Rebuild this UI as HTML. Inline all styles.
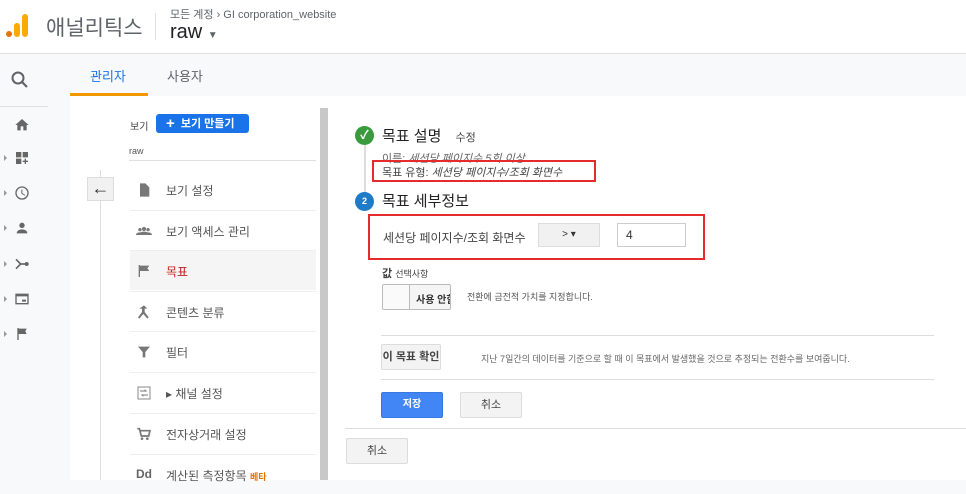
<!DOCTYPE html>
<html><head><meta charset="utf-8"><style>
*{margin:0;padding:0;box-sizing:border-box}
body{width:966px;height:480px;overflow:hidden;background:#f8f9fa;font-family:"Liberation Sans","Noto Sans CJK KR",sans-serif;color:#333;position:relative}
.a{position:absolute}
.t{font-size:12px;color:#444;white-space:nowrap}
.btn{position:absolute;background:#f3f3f3;border:1px solid #dcdcdc;border-radius:2px;font-size:11px;font-weight:bold;color:#444;text-align:center}
.mi{position:absolute;left:130px;width:186px;height:40px;border-top:1px solid #eee}
.mi span{position:absolute;left:36px;top:12px;font-size:12px;color:#555}
.ic{position:absolute;left:6px;top:12px;width:16px;height:16px;fill:#777}
.si{position:absolute;left:14px;width:16px;height:16px;fill:#666}
.ar{position:absolute;left:4px;width:0;height:0;border-left:3px solid #999;border-top:3px solid transparent;border-bottom:3px solid transparent}
</style></head><body>
<div class="a" style="left:0;top:0;width:966px;height:54px;background:#fff;border-bottom:1px solid #e0e0e0"></div>
<svg class="a" style="left:5px;top:12px" width="24" height="26"><circle cx="4" cy="22" r="3" fill="#e37400"/><rect x="9" y="11" width="6" height="14" rx="3" fill="#f9ab00"/><rect x="17" y="2" width="6" height="23" rx="3" fill="#f9ab00"/></svg>
<div class="a" style="left:46px;top:12px;font-size:21px;color:#5f6368">애널리틱스</div>
<div class="a" style="left:155px;top:13px;width:1px;height:27px;background:#e0e0e0"></div>
<div class="a" style="left:170px;top:6px;font-size:11px;color:#5f6368">모든 계정 › GI corporation_website</div>
<div class="a" style="left:170px;top:21px;font-size:20px;color:#202124">raw <span style="font-size:10px;color:#5f6368">▼</span></div>
<svg class="a" style="left:10px;top:70px" width="20" height="20"><circle cx="8" cy="8" r="5.5" stroke="#5f6368" stroke-width="2" fill="none"/><line x1="12" y1="12" x2="17" y2="17" stroke="#5f6368" stroke-width="2.2"/></svg>
<div class="a" style="left:0;top:106px;width:48px;height:1px;background:#e0e0e0"></div>
<svg class="si" style="top:117px" viewBox="0 0 24 24"><path d="M10 20v-6h4v6h5v-8h3L12 3 2 12h3v8z"/></svg>
<div class="ar" style="top:155px"></div>
<svg class="si" style="top:150px" viewBox="0 0 24 24"><path d="M3 3h8v8H3zM13 3h8v8h-8zM3 13h8v8H3zM16 13h2v3h3v2h-3v3h-2v-3h-3v-2h3z"/></svg>
<div class="ar" style="top:190px"></div>
<svg class="si" style="top:185px" viewBox="0 0 24 24"><path d="M12 2a10 10 0 1 0 0 20 10 10 0 0 0 0-20zm0 18a8 8 0 1 1 0-16 8 8 0 0 1 0 16zm.5-13H11v6l5 3 .8-1.2-4.3-2.6z"/></svg>
<div class="ar" style="top:225px"></div>
<svg class="si" style="top:220px" viewBox="0 0 24 24"><circle cx="12" cy="8" r="4"/><path d="M4 20c0-4 4-6 8-6s8 2 8 6z"/></svg>
<div class="ar" style="top:261px"></div>
<svg class="si" style="top:256px" viewBox="0 0 24 24"><path d="M3 5l7 7-7 7" stroke="#666" stroke-width="2.5" fill="none"/><path d="M10 12h8" stroke="#666" stroke-width="2.5"/><circle cx="19" cy="12" r="3"/></svg>
<div class="ar" style="top:296px"></div>
<svg class="si" style="top:291px" viewBox="0 0 24 24"><path d="M2 4h20v16H2zM4 8v10h16V8zM12 13h6v3h-6z"/></svg>
<div class="ar" style="top:331px"></div>
<svg class="si" style="top:326px" viewBox="0 0 24 24"><path d="M5 3h2v18H5zM7 4h12l-2 4 2 4H7z"/></svg>
<div class="a" style="left:90px;top:66px;font-size:13px;color:#1a73e8">관리자</div>
<div class="a" style="left:167px;top:66px;font-size:13px;color:#5f6368">사용자</div>
<div class="a" style="left:70px;top:93px;width:78px;height:3px;background:#f29900"></div>
<div class="a" style="left:70px;top:96px;width:896px;height:384px;background:#fff"></div>
<div class="a" style="left:320px;top:108px;width:8px;height:372px;background:#c8c8c8"></div>
<div class="a" style="left:100px;top:170px;width:1px;height:310px;background:#ddd"></div>
<div class="a" style="left:87px;top:177px;width:27px;height:24px;background:#f1f1f1;border:1px solid #ddd;font-size:18px;text-align:center;line-height:20px;color:#333">←</div>
<div class="a t" style="left:130px;top:118px;font-size:10px">보기</div>
<div class="a" style="left:156px;top:114px;width:93px;height:19px;background:#1a73e8;border-radius:3px;color:#fff;font-size:11px;font-weight:bold;line-height:19px;padding-left:10px"><span style="font-size:15px;vertical-align:-1px">+</span>&nbsp; 보기 만들기</div>
<div class="a t" style="left:129px;top:146px;font-size:9px;color:#555">raw</div>
<div class="a" style="left:129px;top:160px;width:187px;height:1px;background:#e0e0e0"></div>
<div class="mi" style="top:170px;border-top:0"><svg class="ic" viewBox="0 0 24 24"><path d="M6 2h8l6 6v14H6z"/></svg><span>보기 설정</span></div>
<div class="mi" style="top:210px"><svg class="ic" viewBox="0 0 24 24" style="width:20px;left:4px"><circle cx="6" cy="10" r="2.5"/><circle cx="12" cy="9" r="3"/><circle cx="18" cy="10" r="2.5"/><path d="M0 18c0-3 3-4 6-4s6 1 6 4zM12 18c0-3 3-4 6-4s6 1 6 4zM5 18c0-4 4-5 7-5s7 1 7 5z"/></svg><span>보기 액세스 관리</span></div>
<div class="mi" style="top:250px;background:#f5f5f5"><svg class="ic" viewBox="0 0 24 24"><path d="M4 3h2v18H4zM6 4h14l-3 4 3 4H6z"/></svg><span style="color:#c5221f">목표</span></div>
<div class="mi" style="top:291px"><svg class="ic" viewBox="0 0 24 24"><path d="M12 2l5 5h-4v5l6 8-2 2-6-7-6 7-2-2 6-8V7H5z"/></svg><span>콘텐츠 분류</span></div>
<div class="mi" style="top:331px"><svg class="ic" viewBox="0 0 24 24"><path d="M3 4h18l-7 8v8h-4v-8z"/></svg><span>필터</span></div>
<div class="mi" style="top:372px"><svg class="ic" viewBox="0 0 24 24"><rect x="3" y="3" width="18" height="18" fill="none" stroke="#888" stroke-width="1.5"/><path d="M6 9h9l-2-2M18 15H9l2 2" stroke="#777" stroke-width="1.5" fill="none"/></svg><span>▸ 채널 설정</span></div>
<div class="mi" style="top:413px"><svg class="ic" viewBox="0 0 24 24"><path d="M2 4h3l3 11h11l2-8H7" fill="none" stroke="#777" stroke-width="2.5"/><circle cx="9" cy="19" r="2"/><circle cx="17" cy="19" r="2"/></svg><span>전자상거래 설정</span></div>
<div class="mi" style="top:454px"><span style="left:6px;font-weight:bold;color:#666">Dd</span><span>계산된 측정항목 <b style="font-size:9px;color:#e37400">베타</b></span></div>
<div class="a" style="left:364px;top:140px;width:2px;height:60px;background:#ddd"></div>
<div class="a" style="left:355px;top:126px;width:19px;height:19px;border-radius:50%;background:#3a9a3e;color:#fff;font-size:12px;text-align:center;line-height:19px;font-weight:bold">✓</div>
<div class="a" style="left:382px;top:125px;font-size:15px;color:#222">목표 설명 <span style="font-size:11px;color:#444;margin-left:10px">수정</span></div>
<div class="a t" style="left:382px;top:150px;font-size:11px;color:#666">이름: <i>세션당 페이지수 5회 이상</i></div>
<div class="a" style="left:372px;top:160px;width:224px;height:22px;border:2px solid #e52b2b"></div>
<div class="a t" style="left:382px;top:164px;font-size:11px;color:#444">목표 유형: <i>세션당 페이지수/조회 화면수</i></div>
<div class="a" style="left:355px;top:192px;width:19px;height:19px;border-radius:50%;background:#1e7bc8;color:#fff;font-size:9px;text-align:center;line-height:19px;font-weight:bold">2</div>
<div class="a" style="left:382px;top:190px;font-size:15px;color:#222">목표 세부정보</div>
<div class="a" style="left:368px;top:214px;width:337px;height:46px;border:2px solid #e52b2b"></div>
<div class="a t" style="left:383px;top:229px">세션당 페이지수/조회 화면수</div>
<div class="a" style="left:538px;top:223px;width:62px;height:24px;background:#f1f1f1;border:1px solid #ddd;font-size:10px;text-align:center;line-height:22px">&gt; ▾</div>
<div class="a" style="left:617px;top:223px;width:69px;height:24px;border:1px solid #ccc;font-size:12px;padding:4px 8px">4</div>
<div class="a t" style="left:382px;top:265px;font-size:11px"><b>값</b> <span style="font-size:9px">선택사항</span></div>
<div class="a" style="left:382px;top:284px;width:69px;height:26px;border:1px solid #bbb;border-radius:2px;background:#f5f5f5;overflow:hidden"><div class="a" style="left:0;top:0;width:27px;height:24px;background:#fafafa;border-right:1px solid #bbb"></div><div class="a" style="left:33px;top:6px;font-size:10px;font-weight:bold;color:#333;white-space:nowrap">사용 안함</div></div>
<div class="a t" style="left:467px;top:290px;font-size:9px;color:#555">전환에 금전적 가치를 지정합니다.</div>
<div class="a" style="left:381px;top:335px;width:553px;height:1px;background:#ddd"></div>
<div class="btn" style="left:381px;top:344px;width:60px;height:26px;line-height:24px">이 목표 확인</div>
<div class="a t" style="left:481px;top:352px;font-size:9px;color:#666">지난 7일간의 데이터를 기준으로 할 때 이 목표에서 발생했을 것으로 추정되는 전환수를 보여줍니다.</div>
<div class="a" style="left:381px;top:379px;width:553px;height:1px;background:#ddd"></div>
<div class="a" style="left:381px;top:392px;width:62px;height:26px;background:#4285f4;border:1px solid #3a78e0;border-radius:2px;color:#fff;font-size:10px;font-weight:bold;text-align:center;line-height:24px">저장</div>
<div class="btn" style="left:460px;top:392px;width:62px;height:26px;line-height:24px;font-weight:normal">취소</div>
<div class="a" style="left:345px;top:428px;width:621px;height:1px;background:#ddd"></div>
<div class="btn" style="left:346px;top:438px;width:62px;height:26px;line-height:24px;font-weight:normal">취소</div>
</body></html>
